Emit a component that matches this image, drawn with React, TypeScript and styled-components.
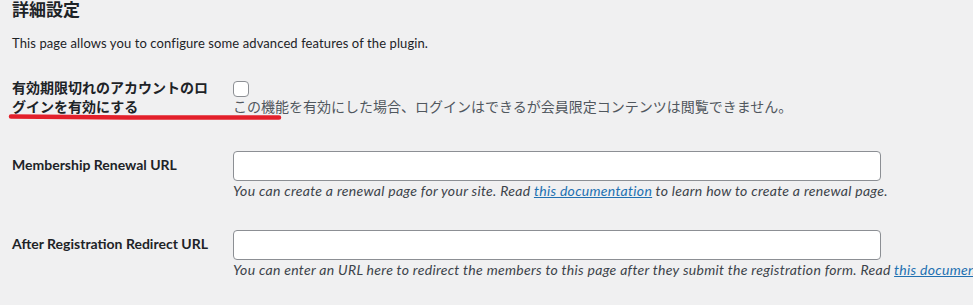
import React from "react";
import styled, { createGlobalStyle } from "styled-components";

const GlobalStyle = createGlobalStyle`
  html, body {
    margin: 0;
    padding: 0;
    background: #f0f0f1;
    overflow: hidden;
  }
  body {
    font-family: "Lato", "Noto Sans CJK JP", sans-serif;
    color: #1d2327;
    font-size: 13px;
  }
`;

const Wrap = styled.div`
  position: relative;
  padding-left: 12px;
  width: 961px;
  height: 305px;
  overflow: hidden;
`;

const Title = styled.h2`
  margin: 0;
  font-size: 17px;
  line-height: 20px;
  font-weight: 600;
`;

const Intro = styled.p`
  margin: 14px 0 0;
  font-size: 13px;
  line-height: 19px;
  letter-spacing: 0.1px;
`;

const FormTable = styled.div`
  margin-top: 6px;
  display: flex;
  flex-direction: column;
`;

const Row = styled.div`
  display: grid;
  grid-template-columns: 221px 1fr;
`;

const Label = styled.label`
  box-sizing: border-box;
  width: 210px;
  padding: 20px 10px 20px 0;
  font-size: 14px;
  line-height: 18.5px;
  font-weight: 700;
  color: #1d2327;
`;

const Field = styled.div<{ $top: number }>`
  padding: ${(p) => p.$top}px 0 15px;
  white-space: nowrap;
`;

const Checkbox = styled.span`
  display: block;
  box-sizing: border-box;
  width: 16px;
  height: 16px;
  border: 1px solid #8c8f94;
  border-radius: 4px;
  background: #fff;
`;

const TextInput = styled.input.attrs({ type: "text" })`
  display: block;
  box-sizing: border-box;
  width: 648px;
  height: 30px;
  margin: 0;
  padding: 0 8px;
  border: 1px solid #8c8f94;
  border-radius: 4px;
  background: #fff;
  font: inherit;
`;

const Description = styled.p<{ $italic?: boolean }>`
  margin: 0;
  font-size: 14px;
  line-height: 19px;
  color: ${(p) => (p.$italic ? "#3c434a" : "#50575e")};
  font-style: ${(p) => (p.$italic ? "italic" : "normal")};
  letter-spacing: ${(p) => (p.$italic ? "0.3px" : "0")};
`;

const DocLink = styled.a`
  color: #2271b1;
  text-decoration: underline;
`;

const Annotation = styled.svg`
  position: absolute;
  left: 7px;
  top: 111px;
  pointer-events: none;
`;

export default function App() {
  return (
    <>
      <GlobalStyle />
      <Wrap>
        <Title>詳細設定</Title>
        <Intro>This page allows you to configure some advanced features of the plugin.</Intro>
        <FormTable>
          <Row>
            <Label>有効期限切れのアカウントのログインを有効にする</Label>
            <Field $top={22}>
              <Checkbox />
              <Description>
                この機能を有効にした場合、ログインはできるが会員限定コンテンツは閲覧できません。
              </Description>
            </Field>
          </Row>
          <Row>
            <Label>Membership Renewal URL</Label>
            <Field $top={15}>
              <TextInput />
              <Description $italic>
                You can create a renewal page for your site. Read{" "}
                <DocLink href="#">this documentation</DocLink> to learn how to create a renewal
                page.
              </Description>
            </Field>
          </Row>
          <Row>
            <Label>After Registration Redirect URL</Label>
            <Field $top={15}>
              <TextInput />
              <Description $italic>
                You can enter an URL here to redirect the members to this page after they submit
                the registration form. Read <DocLink href="#">this documentation</DocLink> to learn
                more.
              </Description>
            </Field>
          </Row>
        </FormTable>
        <Annotation width="276" height="12" viewBox="0 0 276 12">
          <path
            d="M4 5.5 C 90 6.5, 190 7, 272 6.5"
            stroke="#e3202b"
            strokeWidth="4.5"
            strokeLinecap="round"
            fill="none"
          />
        </Annotation>
      </Wrap>
    </>
  );
}
